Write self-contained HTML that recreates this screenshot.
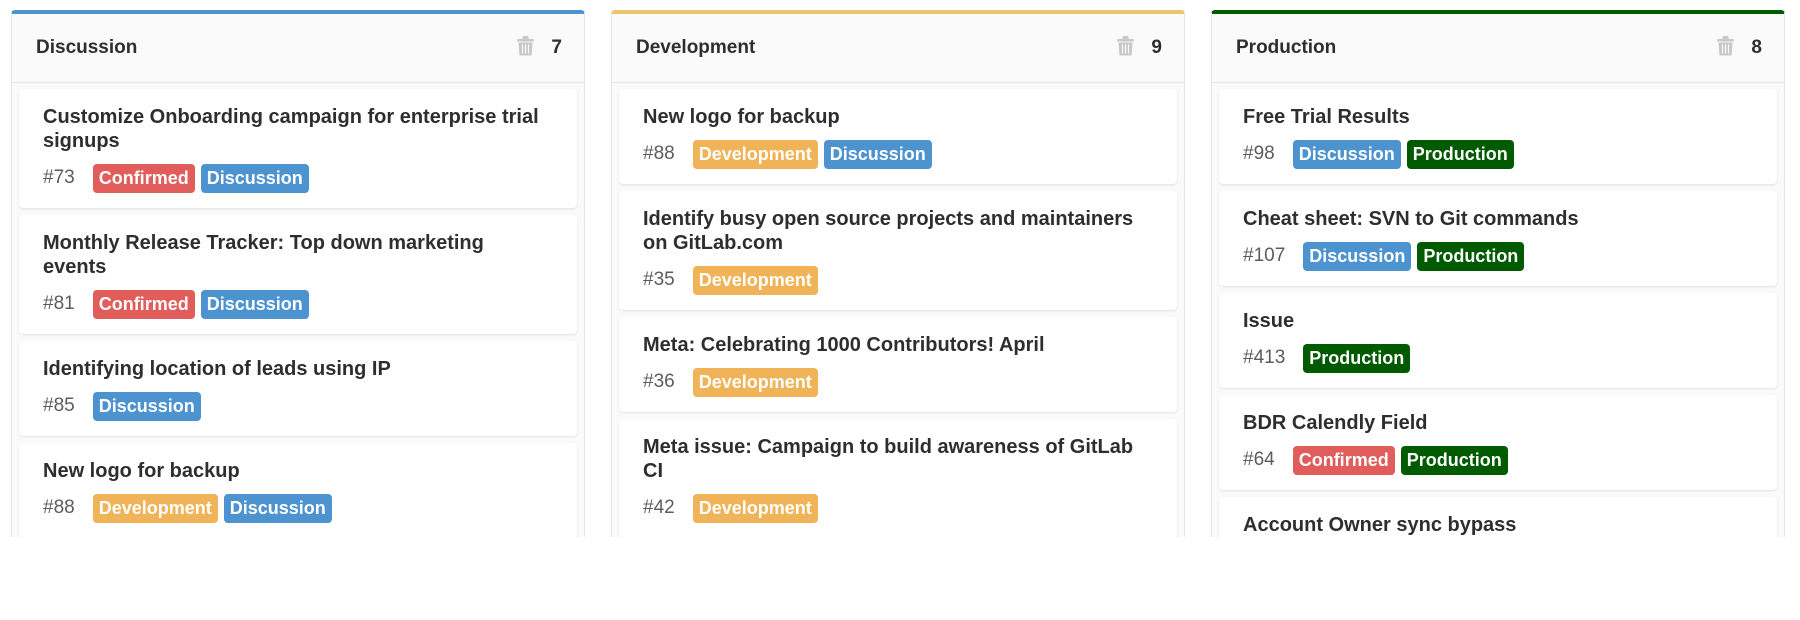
<!DOCTYPE html>
<html><head><meta charset="utf-8"><style>
*{box-sizing:border-box;margin:0;padding:0}
body{width:1800px;height:620px;background:#fff;font-family:"Liberation Sans",sans-serif;position:relative;overflow:hidden}
.col{position:absolute;top:10px;width:574px;height:527px;background:#fafafa;border:1px solid #e5e5e5;border-bottom:none;border-top:4px solid;border-radius:4px 4px 0 0;overflow:hidden}
.hd{height:69px;border-bottom:1px solid #e5e5e5;position:relative}
.hd .t{position:absolute;left:24px;top:23px;font-size:19px;font-weight:bold;color:#2e2e2e}
.hd .n{position:absolute;right:22px;top:23px;font-size:19px;font-weight:bold;color:#2e2e2e}
.hd svg{position:absolute;right:50px;top:22px}
.cards{padding:6px 7px 0 7px}
.card{background:#fff;border-radius:4px;box-shadow:0 1px 2px rgba(0,0,0,.1);padding:16px 24px 15px 24px;margin-bottom:7px}
.ti{font-size:20px;font-weight:bold;color:#2e2e2e;line-height:24px;white-space:nowrap}
.m{margin-top:10px;height:30px;display:flex;align-items:center;font-size:19px;color:#5c5c5c}
.m .id{margin-right:18px}
.l{display:inline-block;height:29px;line-height:29px;padding:0 6px;border-radius:4px;color:#fff;font-size:18px;font-weight:bold;margin-right:6px}
.c{background:#e05d5b}.d{background:#4d93d0}.v{background:#f0b357}.p{background:#005a00}
</style></head><body>
<div class="col" style="left:11px;border-top-color:#4d93d0">
<div class="hd"><span class="t">Discussion</span><svg width="17" height="20" viewBox="0 0 17 20"><rect x="0" y="3" width="17" height="2.5" rx="1" fill="#c8c8c8"/><rect x="5.5" y="0" width="6" height="3.5" rx="1" fill="#c8c8c8"/><path d="M1.5 6.5h14l-1 13h-12z" fill="#c8c8c8"/><path d="M5.5 8.5v9M8.5 8.5v9M11.5 8.5v9" stroke="#fafafa" stroke-width="1.2"/></svg><span class="n">7</span></div>
<div class="cards">
<div class="card"><div class="ti">Customize Onboarding campaign for enterprise trial<br>signups</div><div class="m"><span class="id">#73</span><span class="l c">Confirmed</span><span class="l d">Discussion</span></div></div>
<div class="card"><div class="ti">Monthly Release Tracker: Top down marketing<br>events</div><div class="m"><span class="id">#81</span><span class="l c">Confirmed</span><span class="l d">Discussion</span></div></div>
<div class="card"><div class="ti">Identifying location of leads using IP</div><div class="m"><span class="id">#85</span><span class="l d">Discussion</span></div></div>
<div class="card"><div class="ti">New logo for backup</div><div class="m"><span class="id">#88</span><span class="l v">Development</span><span class="l d">Discussion</span></div></div>
</div></div>
<div class="col" style="left:611px;border-top-color:#f0c36d">
<div class="hd"><span class="t">Development</span><svg width="17" height="20" viewBox="0 0 17 20"><rect x="0" y="3" width="17" height="2.5" rx="1" fill="#c8c8c8"/><rect x="5.5" y="0" width="6" height="3.5" rx="1" fill="#c8c8c8"/><path d="M1.5 6.5h14l-1 13h-12z" fill="#c8c8c8"/><path d="M5.5 8.5v9M8.5 8.5v9M11.5 8.5v9" stroke="#fafafa" stroke-width="1.2"/></svg><span class="n">9</span></div>
<div class="cards">
<div class="card"><div class="ti">New logo for backup</div><div class="m"><span class="id">#88</span><span class="l v">Development</span><span class="l d">Discussion</span></div></div>
<div class="card"><div class="ti">Identify busy open source projects and maintainers<br>on GitLab.com</div><div class="m"><span class="id">#35</span><span class="l v">Development</span></div></div>
<div class="card"><div class="ti">Meta: Celebrating 1000 Contributors! April</div><div class="m"><span class="id">#36</span><span class="l v">Development</span></div></div>
<div class="card"><div class="ti">Meta issue: Campaign to build awareness of GitLab<br>CI</div><div class="m"><span class="id">#42</span><span class="l v">Development</span></div></div>
</div></div>
<div class="col" style="left:1211px;border-top-color:#005a00">
<div class="hd"><span class="t">Production</span><svg width="17" height="20" viewBox="0 0 17 20"><rect x="0" y="3" width="17" height="2.5" rx="1" fill="#c8c8c8"/><rect x="5.5" y="0" width="6" height="3.5" rx="1" fill="#c8c8c8"/><path d="M1.5 6.5h14l-1 13h-12z" fill="#c8c8c8"/><path d="M5.5 8.5v9M8.5 8.5v9M11.5 8.5v9" stroke="#fafafa" stroke-width="1.2"/></svg><span class="n">8</span></div>
<div class="cards">
<div class="card"><div class="ti">Free Trial Results</div><div class="m"><span class="id">#98</span><span class="l d">Discussion</span><span class="l p">Production</span></div></div>
<div class="card"><div class="ti">Cheat sheet: SVN to Git commands</div><div class="m"><span class="id">#107</span><span class="l d">Discussion</span><span class="l p">Production</span></div></div>
<div class="card"><div class="ti">Issue</div><div class="m"><span class="id">#413</span><span class="l p">Production</span></div></div>
<div class="card"><div class="ti">BDR Calendly Field</div><div class="m"><span class="id">#64</span><span class="l c">Confirmed</span><span class="l p">Production</span></div></div>
<div class="card"><div class="ti">Account Owner sync bypass</div><div class="m"><span class="id">#1</span></div></div>
</div></div>
</body></html>
